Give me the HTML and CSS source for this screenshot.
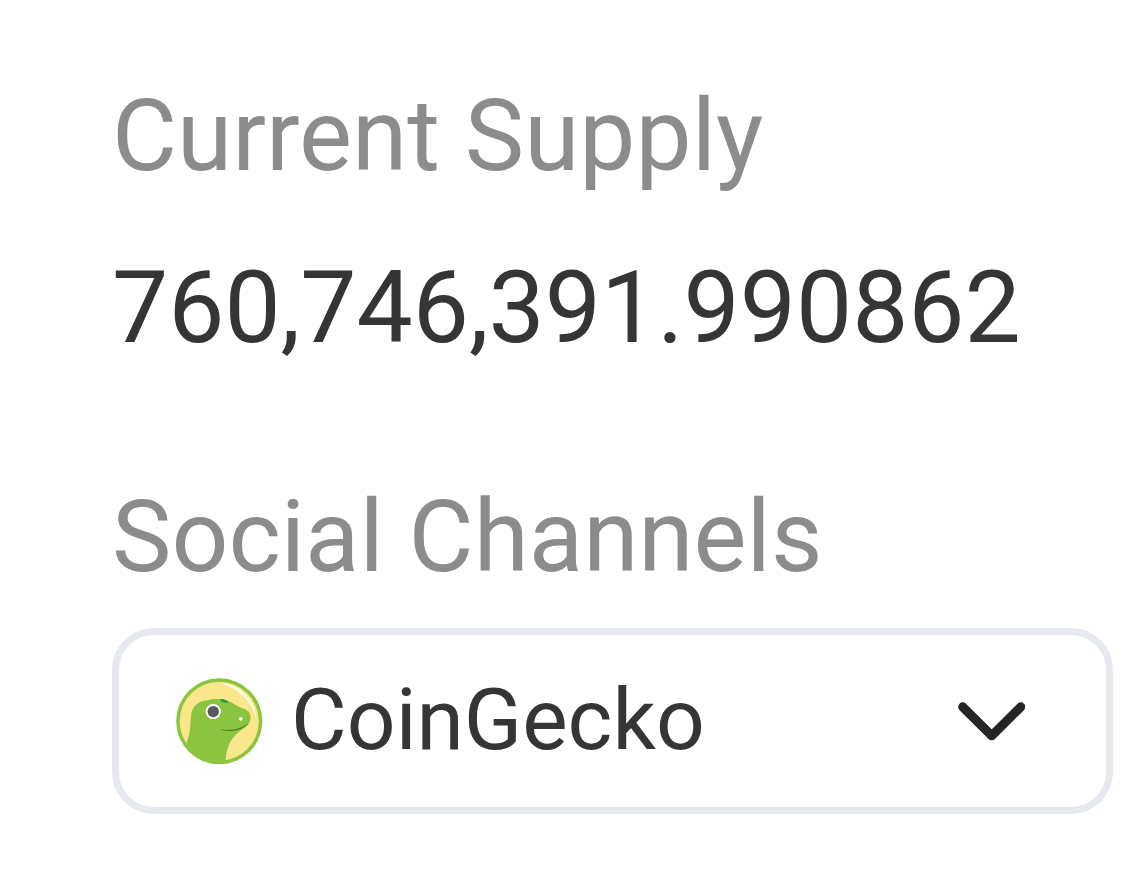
FILE: index.html
```
<!DOCTYPE html>
<html lang="en">
<head>
<meta charset="utf-8">
<title>Token supply</title>
<link rel="stylesheet" href="styles.css">
</head>
<body>
<main class="panel">
  <section class="supply">
    <h2 class="label">Current Supply</h2>
    <p class="value">760,746,391.990862</p>
  </section>
  <section class="social">
    <h2 class="label">Social Channels</h2>
    <button class="select" type="button">
      <svg class="gecko" viewBox="0 0 260 260" aria-hidden="true">
        <circle cx="130" cy="130" r="129.500" fill="#8bc53f"/>
        <circle cx="130" cy="130" r="119" fill="#fae78b"/>
        <path d="M134 15A115 115 0 0 1 242 125C239 110 232 94 221 77C200 46 170 28 134 15Z" fill="#fffbe6"/>
        <path d="M31 196C44 166 42 143 45 116C47 84 67 69 95 67C112 60 134 63 151 67C174 74 184 87 202 92C216 96 226 107 224 123C222 140 208 149 192 159C168 178 151 203 149 249A120 120 0 0 1 31 196Z" fill="#8bc53f"/>
        <path d="M131 65C138 61 151 64 159 74C149 76 140 73 131 65Z" fill="#249b45"/>
        <circle cx="112" cy="101" r="23" fill="#fff"/>
        <circle cx="112" cy="101" r="17" fill="#58595b"/>
        <circle cx="195" cy="123" r="5.500" fill="#fff"/>
        <path d="M132 153C163 161 193 155 217 136C197 162 155 164 132 153Z" fill="#4f7437"/>
      </svg>
      <span class="name">CoinGecko</span>
      <svg class="chevron" viewBox="0 0 68 39" aria-hidden="true"><path d="M4.800 4.800L34 33.800L63.200 4.800"/></svg>
    </button>
  </section>
</main>
</body>
</html>
```
FILE: styles.css
```
* { box-sizing: border-box; }
body { margin: 0; background: #fff; font-family: Roboto, sans-serif; }
.panel { width: 1125px; height: 869px; padding: 78px 12px 0 112px; overflow: hidden; }
.label, .value { margin: 0; font-size: 100px; line-height: 116px; font-weight: 400; white-space: nowrap; }
.label { color: #8c8c8c; }
.value { margin-top: 56px; color: #353535; }
.social { margin-top: 113px; }
.select { display: flex; align-items: center; width: 1001px; height: 186px; margin-top: 33px; padding: 0 81px 0 57px; border: 7px solid #e6eaee; border-radius: 42px; background: #fff; color: #353535; font: 400 85.700px/102px Roboto, sans-serif; }
.gecko { flex: none; width: 86.500px; height: 86.500px; }
.name { margin-left: 28.500px; padding-bottom: 2px; }
.chevron { width: 67.500px; height: 39px; margin-left: auto; }
.chevron path { fill: none; stroke: #252525; stroke-width: 9.200px; stroke-linecap: round; stroke-linejoin: round; }
```
